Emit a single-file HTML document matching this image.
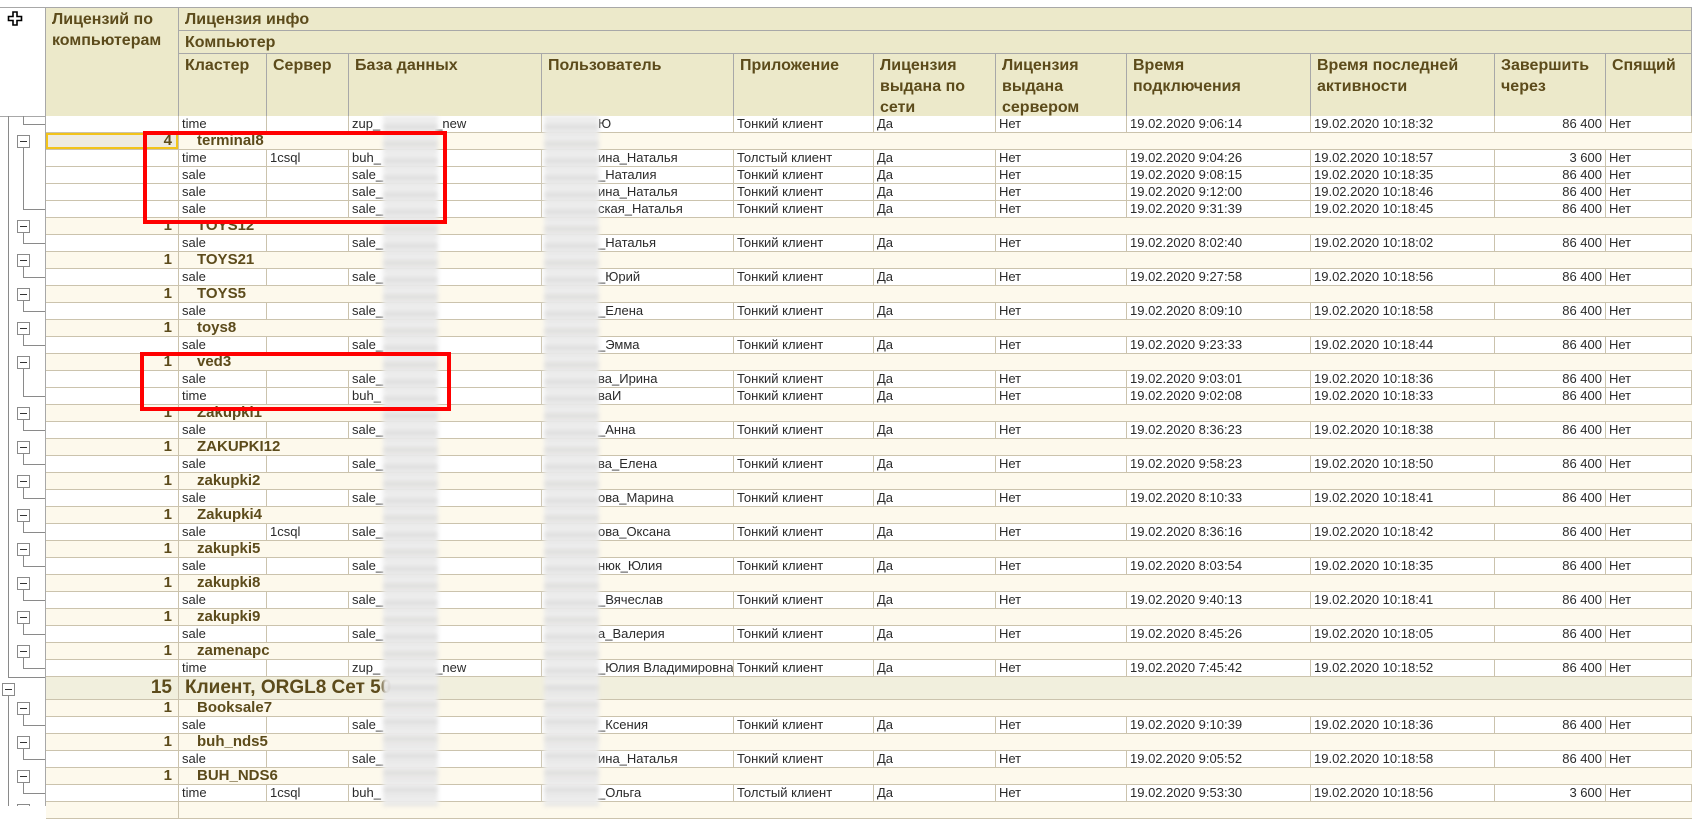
<!DOCTYPE html>
<html><head><meta charset="utf-8"><style>
*{margin:0;padding:0;box-sizing:border-box}
body{width:1694px;height:806px;overflow:hidden;background:#fff;font-family:"Liberation Sans",Arial,sans-serif;position:relative}
.h{position:absolute;background:#ece9ca;border-right:1px solid #a8a8a8;border-bottom:1px solid #a8a8a8;color:#5c4b1b;font-weight:bold;font-size:16px;line-height:21px;padding:1px 6px}
#rows{position:absolute;left:46px;top:116px;width:1646px}
.r{display:flex;height:17px;border-bottom:1px solid #cbc3ad;background:#fff}
.r>i{font-style:normal;border-right:1px solid #cbc3ad;padding:0 3px;line-height:16px;white-space:nowrap;overflow:hidden;font-size:13px;color:#2a2a2a;flex:none}
.r>i:nth-child(1){width:133px}.r>i:nth-child(2){width:88px}.r>i:nth-child(3){width:82px}
.r>i:nth-child(4){width:193px}.r>i:nth-child(5){width:192px;padding-left:56px}.r>i:nth-child(6){width:140px}
.r>i:nth-child(7){width:122px}.r>i:nth-child(8){width:131px}.r>i:nth-child(9){width:184px}
.r>i:nth-child(10){width:184px}.r>i:nth-child(11){width:111px;text-align:right}.r>i:nth-child(12){width:86px}
.g{background:#fdf9ec}
.g>b{width:133px;border-right:1px solid #cbc3ad;text-align:right;padding-right:6px;font-size:15px;line-height:16px;color:#5c4b1b;flex:none}
.g>u{text-decoration:none;flex:1;padding-left:18px;font-weight:bold;font-size:15px;line-height:16px;color:#5c4b1b}
.c{height:23px;background:#f1efdd}
.c>b,.c>u{font-size:19px;line-height:22px}
.c>u{padding-left:6px}
.blur{position:absolute;top:116px;height:690px;background:repeating-linear-gradient(#e4e4e4 0,#f2f2f2 6px,#dadada 10px,#efefef 17px);filter:blur(2px);opacity:.95}
.box{position:absolute;border:4px solid #f00}
</style></head><body>
<div style="position:absolute;left:0;top:7px;width:1692px;height:1px;background:#a8a8a8"></div>
<div style="position:absolute;left:0;top:116px;width:46px;height:1px;background:#a8a8a8"></div>
<div style="position:absolute;left:45px;top:7px;width:1px;height:110px;background:#a8a8a8"></div>
<svg style="position:absolute;left:7px;top:11px" width="17" height="16" viewBox="0 0 17 16"><path d="M6 1H10V5.5H14.5V9.5H10V14H6V9.5H1.5V5.5H6Z" fill="#fff" stroke="#000" stroke-width="1.6"/></svg>
<div class="h" style="left:46px;top:8px;width:133px;height:109px">Лицензий по компьютерам</div>
<div class="h" style="left:179px;top:8px;width:1513px;height:23px">Лицензия инфо</div>
<div class="h" style="left:179px;top:31px;width:1513px;height:23px">Компьютер</div>
<div class="h" style="left:179px;top:54px;width:88px;height:63px">Кластер</div>
<div class="h" style="left:267px;top:54px;width:82px;height:63px">Сервер</div>
<div class="h" style="left:349px;top:54px;width:193px;height:63px">База данных</div>
<div class="h" style="left:542px;top:54px;width:192px;height:63px">Пользователь</div>
<div class="h" style="left:734px;top:54px;width:140px;height:63px">Приложение</div>
<div class="h" style="left:874px;top:54px;width:122px;height:63px">Лицензия выдана по сети</div>
<div class="h" style="left:996px;top:54px;width:131px;height:63px">Лицензия выдана сервером</div>
<div class="h" style="left:1127px;top:54px;width:184px;height:63px">Время<br>подключения</div>
<div class="h" style="left:1311px;top:54px;width:184px;height:63px">Время последней активности</div>
<div class="h" style="left:1495px;top:54px;width:111px;height:63px">Завершить через</div>
<div class="h" style="left:1606px;top:54px;width:86px;height:63px">Спящий</div>

<div id="rows">
<div class="r"><i></i><i>time</i><i></i><i>zup_<span style="padding-left:55px">_new</span></i><i>Ю</i><i>Тонкий клиент</i><i>Да</i><i>Нет</i><i>19.02.2020 9:06:14</i><i>19.02.2020 10:18:32</i><i>86 400</i><i>Нет</i></div>
<div class="r g"><b style="background:#eeebe2;box-shadow:inset 0 0 0 2px #f2c31b">4</b><u>terminal8</u></div>
<div class="r"><i></i><i>time</i><i>1csql</i><i>buh_</i><i>ина_Наталья</i><i>Толстый клиент</i><i>Да</i><i>Нет</i><i>19.02.2020 9:04:26</i><i>19.02.2020 10:18:57</i><i>3 600</i><i>Нет</i></div>
<div class="r"><i></i><i>sale</i><i></i><i>sale_</i><i>_Наталия</i><i>Тонкий клиент</i><i>Да</i><i>Нет</i><i>19.02.2020 9:08:15</i><i>19.02.2020 10:18:35</i><i>86 400</i><i>Нет</i></div>
<div class="r"><i></i><i>sale</i><i></i><i>sale_</i><i>ина_Наталья</i><i>Тонкий клиент</i><i>Да</i><i>Нет</i><i>19.02.2020 9:12:00</i><i>19.02.2020 10:18:46</i><i>86 400</i><i>Нет</i></div>
<div class="r"><i></i><i>sale</i><i></i><i>sale_</i><i>ская_Наталья</i><i>Тонкий клиент</i><i>Да</i><i>Нет</i><i>19.02.2020 9:31:39</i><i>19.02.2020 10:18:45</i><i>86 400</i><i>Нет</i></div>
<div class="r g"><b>1</b><u>TOYS12</u></div>
<div class="r"><i></i><i>sale</i><i></i><i>sale_</i><i>_Наталья</i><i>Тонкий клиент</i><i>Да</i><i>Нет</i><i>19.02.2020 8:02:40</i><i>19.02.2020 10:18:02</i><i>86 400</i><i>Нет</i></div>
<div class="r g"><b>1</b><u>TOYS21</u></div>
<div class="r"><i></i><i>sale</i><i></i><i>sale_</i><i>_Юрий</i><i>Тонкий клиент</i><i>Да</i><i>Нет</i><i>19.02.2020 9:27:58</i><i>19.02.2020 10:18:56</i><i>86 400</i><i>Нет</i></div>
<div class="r g"><b>1</b><u>TOYS5</u></div>
<div class="r"><i></i><i>sale</i><i></i><i>sale_</i><i>_Елена</i><i>Тонкий клиент</i><i>Да</i><i>Нет</i><i>19.02.2020 8:09:10</i><i>19.02.2020 10:18:58</i><i>86 400</i><i>Нет</i></div>
<div class="r g"><b>1</b><u>toys8</u></div>
<div class="r"><i></i><i>sale</i><i></i><i>sale_</i><i>_Эмма</i><i>Тонкий клиент</i><i>Да</i><i>Нет</i><i>19.02.2020 9:23:33</i><i>19.02.2020 10:18:44</i><i>86 400</i><i>Нет</i></div>
<div class="r g"><b>1</b><u>ved3</u></div>
<div class="r"><i></i><i>sale</i><i></i><i>sale_</i><i>ва_Ирина</i><i>Тонкий клиент</i><i>Да</i><i>Нет</i><i>19.02.2020 9:03:01</i><i>19.02.2020 10:18:36</i><i>86 400</i><i>Нет</i></div>
<div class="r"><i></i><i>time</i><i></i><i>buh_</i><i>ваИ</i><i>Тонкий клиент</i><i>Да</i><i>Нет</i><i>19.02.2020 9:02:08</i><i>19.02.2020 10:18:33</i><i>86 400</i><i>Нет</i></div>
<div class="r g"><b>1</b><u>Zakupki1</u></div>
<div class="r"><i></i><i>sale</i><i></i><i>sale_</i><i>_Анна</i><i>Тонкий клиент</i><i>Да</i><i>Нет</i><i>19.02.2020 8:36:23</i><i>19.02.2020 10:18:38</i><i>86 400</i><i>Нет</i></div>
<div class="r g"><b>1</b><u>ZAKUPKI12</u></div>
<div class="r"><i></i><i>sale</i><i></i><i>sale_</i><i>ва_Елена</i><i>Тонкий клиент</i><i>Да</i><i>Нет</i><i>19.02.2020 9:58:23</i><i>19.02.2020 10:18:50</i><i>86 400</i><i>Нет</i></div>
<div class="r g"><b>1</b><u>zakupki2</u></div>
<div class="r"><i></i><i>sale</i><i></i><i>sale_</i><i>ова_Марина</i><i>Тонкий клиент</i><i>Да</i><i>Нет</i><i>19.02.2020 8:10:33</i><i>19.02.2020 10:18:41</i><i>86 400</i><i>Нет</i></div>
<div class="r g"><b>1</b><u>Zakupki4</u></div>
<div class="r"><i></i><i>sale</i><i>1csql</i><i>sale_</i><i>ова_Оксана</i><i>Тонкий клиент</i><i>Да</i><i>Нет</i><i>19.02.2020 8:36:16</i><i>19.02.2020 10:18:42</i><i>86 400</i><i>Нет</i></div>
<div class="r g"><b>1</b><u>zakupki5</u></div>
<div class="r"><i></i><i>sale</i><i></i><i>sale_</i><i>нюк_Юлия</i><i>Тонкий клиент</i><i>Да</i><i>Нет</i><i>19.02.2020 8:03:54</i><i>19.02.2020 10:18:35</i><i>86 400</i><i>Нет</i></div>
<div class="r g"><b>1</b><u>zakupki8</u></div>
<div class="r"><i></i><i>sale</i><i></i><i>sale_</i><i>_Вячеслав</i><i>Тонкий клиент</i><i>Да</i><i>Нет</i><i>19.02.2020 9:40:13</i><i>19.02.2020 10:18:41</i><i>86 400</i><i>Нет</i></div>
<div class="r g"><b>1</b><u>zakupki9</u></div>
<div class="r"><i></i><i>sale</i><i></i><i>sale_</i><i>а_Валерия</i><i>Тонкий клиент</i><i>Да</i><i>Нет</i><i>19.02.2020 8:45:26</i><i>19.02.2020 10:18:05</i><i>86 400</i><i>Нет</i></div>
<div class="r g"><b>1</b><u>zamenapc</u></div>
<div class="r"><i></i><i>time</i><i></i><i>zup_<span style="padding-left:55px">_new</span></i><i>_Юлия Владимировна</i><i>Тонкий клиент</i><i>Да</i><i>Нет</i><i>19.02.2020 7:45:42</i><i>19.02.2020 10:18:52</i><i>86 400</i><i>Нет</i></div>
<div class="r g c"><b>15</b><u>Клиент, ORGL8 Сет 50</u></div>
<div class="r g"><b>1</b><u>Booksale7</u></div>
<div class="r"><i></i><i>sale</i><i></i><i>sale_</i><i>_Ксения</i><i>Тонкий клиент</i><i>Да</i><i>Нет</i><i>19.02.2020 9:10:39</i><i>19.02.2020 10:18:36</i><i>86 400</i><i>Нет</i></div>
<div class="r g"><b>1</b><u>buh_nds5</u></div>
<div class="r"><i></i><i>sale</i><i></i><i>sale_</i><i>ина_Наталья</i><i>Тонкий клиент</i><i>Да</i><i>Нет</i><i>19.02.2020 9:05:52</i><i>19.02.2020 10:18:58</i><i>86 400</i><i>Нет</i></div>
<div class="r g"><b>1</b><u>BUH_NDS6</u></div>
<div class="r"><i></i><i>time</i><i>1csql</i><i>buh_</i><i>_Ольга</i><i>Толстый клиент</i><i>Да</i><i>Нет</i><i>19.02.2020 9:53:30</i><i>19.02.2020 10:18:56</i><i>3 600</i><i>Нет</i></div>
<div class="r g"><b></b><u></u></div>
</div>

<div class="blur" style="left:383px;width:55px"></div>
<div class="blur" style="left:544px;width:55px"></div>

<svg style="position:absolute;left:0;top:0" width="46" height="806">
<g stroke="#8a8a8a" stroke-width="1" fill="none">
<path d="M8.5 116V677.5H46M23.5 116V124.5H46"/>
<path d="M23.5 147V209.5H46M23.5 232V243.5H46M23.5 266V277.5H46M23.5 300V311.5H46M23.5 334V345.5H46M23.5 368V396.5H46M23.5 419V430.5H46M23.5 453V464.5H46M23.5 487V498.5H46M23.5 521V532.5H46M23.5 555V566.5H46M23.5 589V600.5H46M23.5 623V634.5H46M23.5 657V668.5H46"/>
<path d="M8.5 695V806M23.5 714V725.5H46M23.5 748V759.5H46M23.5 782V793.5H46"/>
</g>
<g stroke="#8a8a8a" fill="#fff">
<rect x="17.5" y="135.5" width="12" height="12"/><rect x="17.5" y="220.5" width="12" height="12"/><rect x="17.5" y="254.5" width="12" height="12"/><rect x="17.5" y="288.5" width="12" height="12"/><rect x="17.5" y="322.5" width="12" height="12"/><rect x="17.5" y="356.5" width="12" height="12"/><rect x="17.5" y="407.5" width="12" height="12"/><rect x="17.5" y="441.5" width="12" height="12"/><rect x="17.5" y="475.5" width="12" height="12"/><rect x="17.5" y="509.5" width="12" height="12"/><rect x="17.5" y="543.5" width="12" height="12"/><rect x="17.5" y="577.5" width="12" height="12"/><rect x="17.5" y="611.5" width="12" height="12"/><rect x="17.5" y="645.5" width="12" height="12"/>
<rect x="2.5" y="683.5" width="12" height="12"/>
<rect x="17.5" y="702.5" width="12" height="12"/><rect x="17.5" y="736.5" width="12" height="12"/><rect x="17.5" y="770.5" width="12" height="12"/><rect x="17.5" y="804.5" width="12" height="12"/>
</g>
<g stroke="#333" stroke-width="1">
<path d="M20 141.5h7M20 226.5h7M20 260.5h7M20 294.5h7M20 328.5h7M20 362.5h7M20 413.5h7M20 447.5h7M20 481.5h7M20 515.5h7M20 549.5h7M20 583.5h7M20 617.5h7M20 651.5h7M5 689.5h7M20 708.5h7M20 742.5h7M20 776.5h7"/>
</g>
</svg>
<div style="position:absolute;left:45px;top:116px;width:1px;height:690px;background:#a8a8a8"></div>

<div class="box" style="left:143px;top:131px;width:304px;height:93px"></div>
<div class="box" style="left:140px;top:352px;width:311px;height:59px"></div>
</body></html>
